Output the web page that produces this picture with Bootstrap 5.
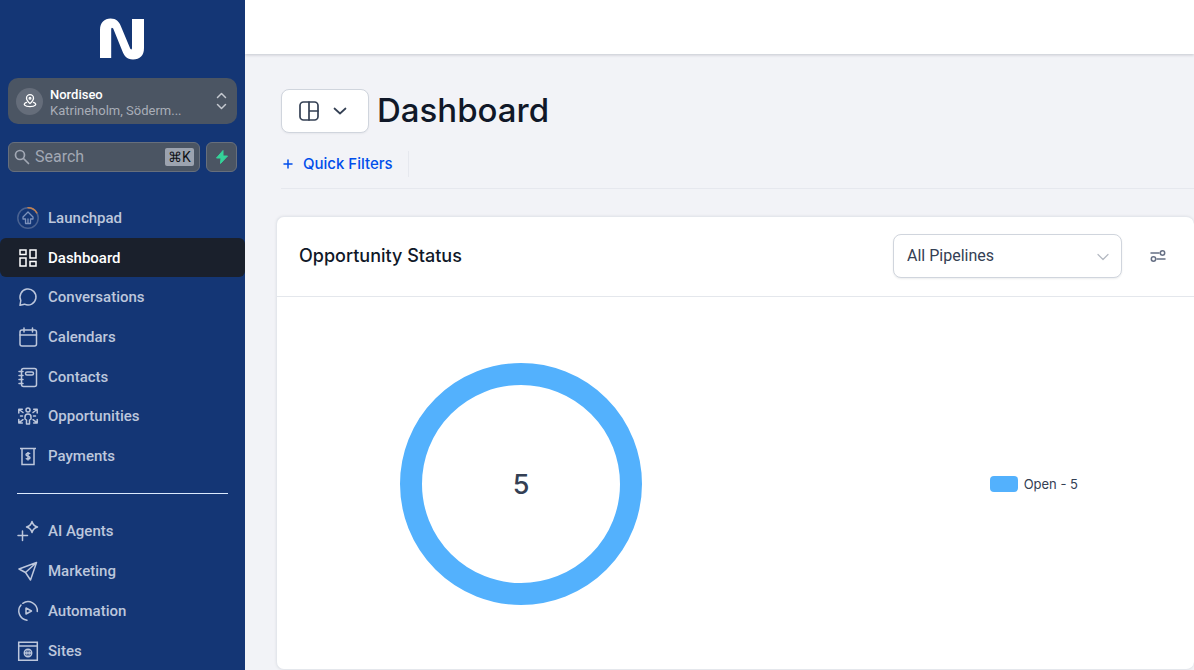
<!DOCTYPE html>
<html lang="en">
<head>
<meta charset="utf-8">
<meta name="viewport" content="width=device-width, initial-scale=1">
<title>Dashboard</title>
<link href="https://cdn.jsdelivr.net/npm/bootstrap@5.3.0/dist/css/bootstrap.min.css" rel="stylesheet">
<style>
  body { font-family: Inter, "Liberation Sans", sans-serif; background: #f2f3f7; color: #101828; }
  .app-shell { height: 100vh; }
  .app-side { flex: 0 0 245px; background: #143675; font-family: Roboto, "Liberation Sans", sans-serif; }
  .brand-mark { height: 78px; padding-right: 2px; }
  .grey-box { background: #4b5563; border: 1px solid #676f7c; border-radius: 6px; }
  .account-btn { background: #4b5563; border-radius: 10px; height: 46px; padding: 0 10px 0 8px; font-size: 13px; line-height: 16px; color: #fff; }
  .account-btn:hover { background: #566070; color: #fff; }
  .account-text { padding: 3px 0 0 7px; }
  .account-name { font-weight: 500; }
  .account-place { color: #a9aeb8; }
  .pin-disc { width: 27px; height: 27px; background: #656d7a; }
  .search-row { gap: 6px; margin-top: 18px; }
  .search-wrap { height: 30px; padding: 0 5px; min-width: 0; gap: 5px; }
  .search-wrap input { font-size: 16px; line-height: 20px; color: #fff; width: 100%; min-width: 0; }
  .search-wrap input::placeholder { color: #a2a8b4; opacity: 1; }
  .search-wrap input:focus { outline: none; }
  .key-hint { background: #9ca3af; color: #101318; font-size: 14px; line-height: 18px; width: 29px; border-radius: 2px; }
  .bolt-btn { width: 31px; height: 30px; }
  .side-nav { display: grid; grid-auto-rows: 1fr; }
  .nav-main { height: 277px; margin-top: 26px; }
  .nav-more { height: 159px; }
  .side-nav a { display: flex; align-items: center; gap: 8px; height: 100%; padding: 1px 0 0 16px; color: #bdc7dc; font-size: 15px; line-height: 20px; font-weight: 500; text-decoration: none; border-radius: 6px; }
  .side-nav a.active { background: #1a202c; color: #fff; }
  .side-nav svg, .stroke-icon { fill: none; stroke: currentColor; stroke-width: 1.5; stroke-linecap: round; stroke-linejoin: round; }
  .side-nav svg.sharp-icon { stroke-linecap: butt; stroke-linejoin: miter; }
  .stroke-icon.heavy-icon { stroke-width: 1.7; }
  .side-rule { height: 1px; background: #dbeafe; margin: 18px 17px 17px; }
  .top-strip { height: 54px; box-shadow: 0 1px 3px rgba(16,24,40,.2); }
  .layout-btn { width: 88px; height: 44px; gap: 14px; padding: 0 20px 0 17px; background: #fff; border: 1px solid #d0d5dd; border-radius: 8px; color: #344054; box-shadow: 0 1px 2px rgba(16,24,40,.05); }
  .page-title { font-size: 33px; line-height: 42px; padding-bottom: 2px; font-weight: 500; }
  .title-row { padding: 35px 0 0 36px; }
  .filter-row { margin: 14px 0 0 36px; padding-bottom: 11px; border-bottom: 1px solid #e6e8ee; }
  .filter-btn { gap: 10px; color: #004eeb; font-size: 15px; line-height: 26px; font-weight: 500; padding: 0 15px 0 2px; border-right: 1px solid #e6e8ee; }
  .panel { margin: 27px 0 0 31px; background: #fff; border: 1px solid #e4e7ec; border-right: 0; border-radius: 8px; box-shadow: 0 0 3px rgba(16,24,40,.08); }
  .panel-head { height: 80px; border-bottom: 1px solid #e4e7ec; padding: 0 28px 2px 22px; }
  .panel-title { font-size: 18px; line-height: 24px; font-weight: 500; }
  .pipe-select { width: 229px; height: 44px; border: 1px solid #d0d5dd; border-radius: 8px; box-shadow: 0 1px 2px rgba(16,24,40,.08); }
  .pipe-select select { appearance: none; font-family: Roboto, "Liberation Sans", sans-serif; font-size: 16px; color: #344054; padding: 0 36px 0 13px; }
  .pipe-caret { right: 12px; top: 16px; pointer-events: none; color: #b4b9c2; stroke-width: 1.2; }
  .chart-area { padding: 2px 0 0 1px; }
  .donut-col { flex: 0 0 53%; }
  .donut-col svg { width: 242px; height: 242px; }
  .legend-item { margin-right: 116px; gap: 6px; font-size: 13px; line-height: 16px; color: #344054; }
  .legend-swatch { width: 28px; height: 16px; border-radius: 4px; background: #53b1fd; }
</style>
</head>
<body>
<div class="app-shell d-flex overflow-hidden">
  <aside class="app-side overflow-hidden">
    <div class="brand-mark d-flex justify-content-center align-items-center">
      <svg width="46" height="42" viewBox="0 0 46 42" role="img" aria-label="Nordiseo" fill="#fff"><path d="M1 40V12C1 4.500 5.500.500 11.500.500c6 0 8.700 3.500 10.500 8l9.300 22.300q1.700 2 1.700-1V1H45V30c0 7.500-4 11.500-11 11.500-6.500 0-8.800-4-10.700-8.500L14.200 10.500q-2-2-2 1V40Z"/></svg>
    </div>
    <div class="px-2">
      <button type="button" class="account-btn btn border-0 w-100 d-flex align-items-center text-start">
        <span class="pin-disc rounded-circle d-flex align-items-center justify-content-center flex-shrink-0">
          <svg class="stroke-icon" width="14" height="14" viewBox="0 0 16 16"><path d="M8 11C5.500 8.500 4 6.800 4 4.800a4 4 0 0 1 8 0C12 6.800 10.500 8.500 8 11ZM4 9.500c-5 2-2 5 4 5s9-3 4-5"/><circle cx="8" cy="4.800" r="1"/></svg>
        </span>
        <span class="account-text flex-fill"><span class="account-name d-block">Nordiseo</span><span class="account-place d-block">Katrineholm, Söderm...</span></span>
        <svg class="stroke-icon" width="11" height="18" viewBox="0 0 11 18" color="#c5c9d0"><path d="M1.500 5.500 5.500 1.500l4 4M1.500 12.500l4 4 4-4"/></svg>
      </button>
      <div class="search-row d-flex">
        <div class="search-wrap grey-box flex-fill d-flex align-items-center">
          <svg class="stroke-icon heavy-icon flex-shrink-0" width="16" height="16" viewBox="0 0 16 16" color="#a2a8b4"><circle cx="6" cy="6" r="4.500"/><path d="m9.500 9.500 5 5"/></svg>
          <input type="text" class="bg-transparent border-0 p-0" placeholder="Search" aria-label="Search">
          <span class="key-hint text-center flex-shrink-0">⌘K</span>
        </div>
        <button type="button" class="bolt-btn grey-box p-0 d-flex align-items-center justify-content-center flex-shrink-0" aria-label="Quick actions">
          <svg width="14" height="16" viewBox="0 0 14 16" fill="#34d399" stroke="#34d399" stroke-linejoin="round"><path d="M8 1.500 1.500 9H6l-.5 5.500L12.500 7H8Z"/></svg>
        </button>
      </div>
    </div>
    <nav>
      <ul class="side-nav nav-main list-unstyled mb-0">
        <li><a href="#"><svg width="24" height="24" viewBox="0 0 24 24"><circle cx="12" cy="12" r="10.200" stroke="#4a6291"/><path d="M12 1.800a10.200 10.200 0 0 1 8.800 5" stroke="#c4814e"/><path stroke="#7d92bb" stroke-width="1.300" d="m12 6 5 5v2h-2.500v4.500h-5V13H7v-2ZM12 13v4.500"/></svg>Launchpad</a></li>
        <li><a href="#" class="active" aria-current="page"><svg class="sharp-icon" width="24" height="24" viewBox="0 0 24 24"><path d="M4 4h6v4.500H4ZM14 4h6v8h-6ZM4 12h6v8H4ZM14 15.500h6V20h-6Z"/></svg>Dashboard</a></li>
        <li><a href="#"><svg width="24" height="24" viewBox="0 0 24 24"><path d="M4.800 15.500A8 8 0 1 1 8.500 19.200L4 20.300Z"/></svg>Conversations</a></li>
        <li><a href="#"><svg width="24" height="24" viewBox="0 0 24 24"><rect x="4" y="5" width="16.500" height="16" rx="2"/><path d="M4 10h16.500M8 3v4M16.500 3v4"/></svg>Calendars</a></li>
        <li><a href="#"><svg width="24" height="24" viewBox="0 0 24 24"><rect x="5.500" y="3.500" width="15" height="18" rx="2"/><path d="M3 6.500h4M3 10.500h4M3 14.500h4M3 18.500h4"/><rect x="9.500" y="7" width="8" height="3" rx="1.500"/></svg>Contacts</a></li>
        <li><a href="#"><svg width="24" height="24" viewBox="0 0 24 24"><circle cx="12" cy="6" r="2"/><path d="M12 10c-2 0-3 1-3 3v2l1.500 1v4h3v-4l1.500-1v-2c0-2-1-3-3-3ZM2.800 9V5.200h3.500M3 5.500l4 3M17.700 5.200h3.500V9M21 5.500l-4 3M2.800 15.500v3.500h3.500M3 18.700l4-3M17.700 19h3.500v-3.500M21 18.700l-4-3M4.500 12H6.500M17.500 12h2"/></svg>Opportunities</a></li>
        <li><a href="#"><svg class="sharp-icon" width="24" height="24" viewBox="0 0 24 24"><path d="M4 4.500h16M6 4.500V20.500h12V4.500M14 10c-.5-1-4-1.200-4 .7 0 2 4 1 4 3 0 1.900-3.500 1.700-4 .6M12 8v8.500"/></svg>Payments</a></li>
      </ul>
      <div class="side-rule"></div>
      <ul class="side-nav nav-more list-unstyled mb-0">
        <li><a href="#"><svg width="24" height="24" viewBox="0 0 24 24"><path d="M16 2.500c.8 3 2.500 4.700 5.500 5.500-3 .8-4.700 2.500-5.500 5.500-.8-3-2.500-4.700-5.500-5.500 3-.8 4.700-2.500 5.500-5.500ZM6.500 12v9.500M2 16.500h9.500"/></svg>AI Agents</a></li>
        <li><a href="#"><svg width="24" height="24" viewBox="0 0 24 24"><path d="M20.500 3.500 3 10l6.500 3.500L14.500 21ZM20.500 3.500l-11 10"/></svg>Marketing</a></li>
        <li><a href="#"><svg width="24" height="24" viewBox="0 0 24 24"><path d="M11 21.200A9.300 9.300 0 0 1 5 6M6.800 4.300A9.300 9.300 0 0 1 21.300 12.500"/><path d="M10 9v6l5.500-3Z"/></svg>Automation</a></li>
        <li><a href="#"><svg class="sharp-icon" width="24" height="24" viewBox="0 0 24 24"><path d="M2.700 3.200h18.600v18H2.700ZM2.700 7h18.600"/><circle cx="12" cy="14" r="3.700"/><path d="M8.500 14h7"/><ellipse cx="12" cy="14" rx="1.300" ry="3.700" stroke-width="1"/></svg>Sites</a></li>
      </ul>
    </nav>
  </aside>

  <div class="flex-fill d-flex flex-column overflow-hidden">
    <header class="top-strip bg-white flex-shrink-0"></header>
    <main class="flex-fill d-flex flex-column">
      <div class="title-row d-flex align-items-center">
        <button type="button" class="layout-btn d-flex align-items-center" aria-label="Switch dashboard">
          <svg class="stroke-icon heavy-icon" width="20" height="20" viewBox="0 0 20 20"><rect x="1" y="1" width="18" height="18" rx="3.500"/><path d="M10 1v18M10 10h9"/></svg>
          <svg class="stroke-icon heavy-icon" width="14" height="8" viewBox="0 0 14 8"><path d="m1.500 1.500 5.500 5 5.500-5"/></svg>
        </button>
        <h1 class="page-title mb-0 ms-2">Dashboard</h1>
      </div>
      <div class="filter-row d-flex pt-1">
        <button type="button" class="filter-btn btn border-top-0 border-bottom-0 border-start-0 rounded-0 d-flex align-items-center">
          <svg class="stroke-icon" width="10" height="10" viewBox="0 0 10 10"><path d="M5 1v8M1 5h8"/></svg>Quick Filters
        </button>
      </div>
      <section class="panel flex-fill d-flex flex-column">
        <div class="panel-head d-flex align-items-center">
          <h2 class="panel-title mb-0 me-auto">Opportunity Status</h2>
          <div class="pipe-select position-relative bg-white">
            <select class="w-100 h-100 bg-transparent border-0" aria-label="Pipeline"><option>All Pipelines</option></select>
            <svg class="stroke-icon pipe-caret position-absolute" width="12" height="12" viewBox="0 0 12 12"><path d="m1 3.500 5 5 5-5"/></svg>
          </div>
          <button type="button" class="btn border-0 p-0 ms-4 ps-1 d-flex" aria-label="Widget settings">
            <svg class="stroke-icon" width="16" height="16" viewBox="0 0 16 16" color="#667085"><path d="M1 5h8M7 11h8"/><circle cx="12.500" cy="5" r="2.200"/><circle cx="3.500" cy="11" r="2.200"/></svg>
          </button>
        </div>
        <div class="chart-area flex-fill d-flex align-items-center">
          <div class="donut-col d-flex justify-content-center">
            <svg viewBox="0 0 242 242" role="img" aria-label="Open opportunities: 5"><circle cx="121" cy="121" r="110" fill="none" stroke="#53b1fd" stroke-width="22"/><text x="121" y="131" text-anchor="middle" font-size="27" font-weight="500" fill="#344054">5</text></svg>
          </div>
          <div class="legend-item d-flex align-items-center ms-auto"><span class="legend-swatch"></span>Open - 5</div>
        </div>
      </section>
    </main>
  </div>
</div>
<script src="https://cdn.jsdelivr.net/npm/bootstrap@5.3.0/dist/js/bootstrap.bundle.min.js"></script>
</body>
</html>
